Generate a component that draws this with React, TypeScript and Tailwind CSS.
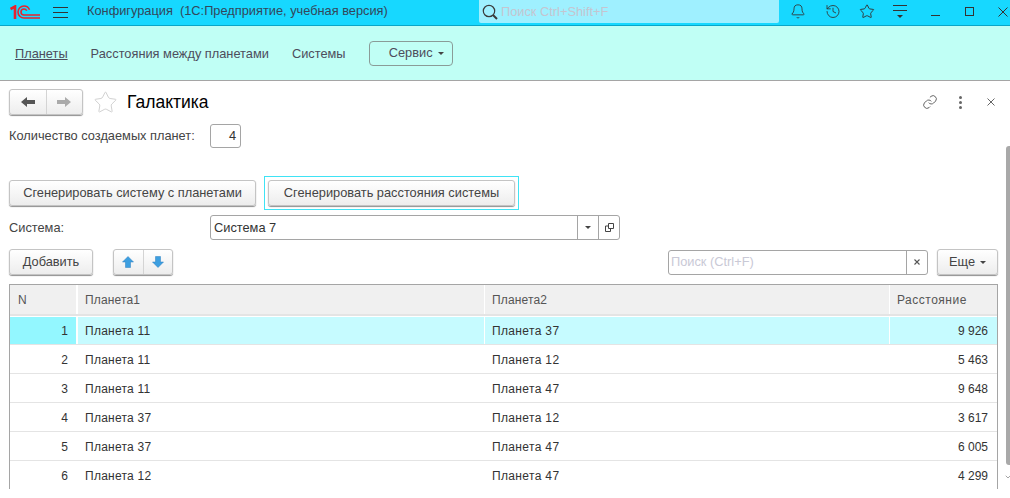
import { Bell, History, Star, ChevronDown } from 'lucide-react'

const rows = [
  ['1', 'Планета 11', 'Планета 37', '9 926'],
  ['2', 'Планета 11', 'Планета 12', '5 463'],
  ['3', 'Планета 11', 'Планета 47', '9 648'],
  ['4', 'Планета 37', 'Планета 12', '3 617'],
  ['5', 'Планета 37', 'Планета 47', '6 005'],
  ['6', 'Планета 12', 'Планета 47', '4 299'],
]

const Caret = ({ className = 'border-t-[#444]' }: { className?: string }) => (
  <span className={`inline-block w-0 h-0 border-x-[3px] border-x-transparent border-t-[3px] ${className}`} />
)

const btn =
  'h-[26px] flex items-center justify-center rounded-[3px] border border-[#c4c4c4] bg-linear-to-b from-white to-[#ededed] shadow-[0_1px_1px_#8f8f8f] text-[#444]'

const Logo = () => (
  <svg width="30" height="14" viewBox="0 0 30 14" fill="none" stroke="#e8222e">
    <path d="M0.5 4 L5 1.5 V14" strokeWidth="2.6" />
    <path d="M30 13 H14 A6 6 0 1 1 14 1 A6 6 0 0 1 19.5 4.8" strokeWidth="1.6" />
    <path d="M30 10 H14 A3 3 0 1 1 14 4 A3 3 0 0 1 16.7 5.8" strokeWidth="1.6" />
  </svg>
)

const Arrow = ({ dir, color }: { dir: 'left' | 'right'; color: string }) => (
  <svg width="14" height="10" viewBox="0 0 14 10" fill={color}>
    {dir === 'left' ? <path d="M0 5 L6 0 V3 H14 V7 H6 V10 Z" /> : <path d="M14 5 L8 0 V3 H0 V7 H8 V10 Z" />}
  </svg>
)

const BlueArrow = ({ up }: { up?: boolean }) => (
  <svg width="12" height="12" viewBox="0 0 12 12" fill="#3d9fe0" stroke="#2a7fc0" strokeWidth="0.5">
    {up ? <path d="M6 0.5 L11.5 6 H8.5 V11.5 H3.5 V6 H0.5 Z" /> : <path d="M6 11.5 L11.5 6 H8.5 V0.5 H3.5 V6 H0.5 Z" />}
  </svg>
)

export default function App() {
  return (
    <div className="relative w-[1010px] h-[498px] overflow-hidden bg-white text-[12.8px] text-[#444] font-['Liberation_Sans',Arial,sans-serif]">
      {/* title bar */}
      <div className="h-[26px] flex items-center bg-[#17d8ff] border-b border-[#0aa6c8]">
        <div className="ml-[10px] -mt-[2px] w-[30px] flex"><Logo /></div>
        <svg className="ml-[13px] -mt-[2px]" width="15" height="12" viewBox="0 0 15 12" stroke="#333" strokeWidth="1">
          <path d="M0 1.5H15M0 6.5H15M0 11.5H15" />
        </svg>
        <span className="ml-[19px] w-[392px] -mt-[3px] text-[#33475a] whitespace-pre">Конфигурация  (1С:Предприятие, учебная версия)</span>
        <div className="w-[300px] h-[23px] -mt-[2px] flex items-center bg-[#9ff0ff] rounded-b-[2px]">
          <svg className="ml-[3px]" width="16" height="16" viewBox="0 0 16 16" fill="none" stroke="#3a3a3a">
            <circle cx="7" cy="7" r="5.7" strokeWidth="1.2" />
            <path d="M11 11 L15 15" strokeWidth="2" />
          </svg>
          <span className="ml-[3px] text-[#c5c5d0]">Поиск Ctrl+Shift+F</span>
        </div>
        <div className="ml-[11px] -mt-[2px] w-[16px] flex justify-center"><Bell size={17} strokeWidth={1.3} color="#333" /></div>
        <div className="ml-[19px] -mt-[2px] w-[16px] flex justify-center"><History size={17} strokeWidth={1.3} color="#333" /></div>
        <div className="ml-[18px] -mt-[2px] w-[16px] flex justify-center"><Star size={17} strokeWidth={1.4} color="#333" /></div>
        <svg className="ml-[18px] -mt-[2px]" width="14" height="13" viewBox="0 0 14 13" stroke="#333">
          <path d="M0 .5H14M0 5.5H14" />
          <path d="M4 10H10L7 13Z" fill="#333" stroke="none" />
        </svg>
        <div className="ml-[24px] w-[9px] h-px mt-[5px] bg-[#333]" />
        <div className="ml-[25px] -mt-[2px] w-[9px] h-[9px] border border-[#333]" />
        <svg className="ml-[24px] -mt-[2px]" width="10" height="10" viewBox="0 0 10 10" stroke="#333">
          <path d="M.5 .5L9.5 9.5M9.5 .5L.5 9.5" />
        </svg>
      </div>

      {/* sections panel */}
      <div className="h-[55px] flex items-center bg-[#c0fff5] border-b border-[#a5a5a5] text-[#4d4d5c] pl-[15px]">
        <span className="underline pt-[1px]">Планеты</span>
        <span className="ml-[23px] pt-[1px]">Расстояния между планетами</span>
        <span className="ml-[23px] pt-[1px]">Системы</span>
        <div className="ml-[23px] w-[84px] h-[25px] flex items-center justify-end gap-[5px] pr-[8px] rounded-[4px] border border-[#8a9c98]">
          <span>Сервис</span>
          <Caret />
        </div>
      </div>

      {/* form */}
      <div className="pl-[9px] pr-[12px]">
        <div className="h-[43px] flex items-center pb-[1px]">
          <div className={`${btn} w-[74px] h-[24px]`}>
            <div className="flex-1 flex justify-center"><Arrow dir="left" color="#555" /></div>
            <div className="w-px h-full bg-[#d4d4d4]" />
            <div className="flex-1 flex justify-center"><Arrow dir="right" color="#aaa" /></div>
          </div>
          <Star className="ml-[10px]" size={25} strokeWidth={0.8} color="#c8c8c8" />
          <span className="ml-[9px] text-[17.5px] text-black">Галактика</span>
          <svg className="ml-auto mr-[21px]" width="16" height="16" viewBox="0 0 24 24" fill="none" stroke="#666" strokeWidth="1.5">
            <path d="M10 13a5 5 0 0 0 7.5.5l3-3a5 5 0 0 0-7-7l-1.7 1.7" />
            <path d="M14 11a5 5 0 0 0-7.5-.5l-3 3a5 5 0 0 0 7 7l1.7-1.7" />
          </svg>
          <div className="mr-[25px] flex flex-col gap-[2px]">
            <span className="w-[3px] h-[3px] rounded-full bg-[#666]" />
            <span className="w-[3px] h-[3px] rounded-full bg-[#666]" />
            <span className="w-[3px] h-[3px] rounded-full bg-[#666]" />
          </div>
          <svg className="mr-[3px]" width="8" height="8" viewBox="0 0 8 8" stroke="#666">
            <path d="M.5 .5L7.5 7.5M7.5 .5L.5 7.5" />
          </svg>
        </div>

        <div className="flex items-center">
          <span className="w-[201px]">Количество создаемых планет:</span>
          <div className="w-[31px] h-[24px] flex items-center justify-end pr-[4px] rounded-[3px] border border-[#a5a5a5] text-[#333]">4</div>
        </div>

        <div className="mt-[28px] flex items-center">
          <div className={`${btn} w-[247px] h-[25px]`}>Сгенерировать систему с планетами</div>
          <div className="ml-[8px] p-[3px] border border-[#3fe3f5]">
            <div className={`${btn} w-[247px] h-[25px]`}>Сгенерировать расстояния системы</div>
          </div>
        </div>

        <div className="mt-[5px] flex items-center">
          <span className="w-[201px]">Система:</span>
          <div className="w-[410px] h-[25px] flex items-center rounded-[3px] border border-[#a5a5a5] text-[#333]">
            <span className="flex-1 pl-[3px]">Система 7</span>
            <div className="w-[21px] h-full flex items-center justify-center border-l border-[#a5a5a5]"><Caret /></div>
            <div className="w-[21px] h-full flex items-center justify-center border-l border-[#a5a5a5]">
              <svg width="9" height="9" viewBox="0 0 9 9" fill="none" stroke="#444">
                <path d="M3.5 .5H8.5V5.5H3.5Z" />
                <path d="M3.5 3H.5V8.5H5.5V5.5" />
              </svg>
            </div>
          </div>
        </div>

        <div className="mt-[9px] flex items-center">
          <div className={`${btn} w-[84px]`}>Добавить</div>
          <div className={`${btn} ml-[20px] w-[60px]`}>
            <div className="flex-1 flex justify-center"><BlueArrow up /></div>
            <div className="w-px h-full bg-[#d4d4d4]" />
            <div className="flex-1 flex justify-center"><BlueArrow /></div>
          </div>
          <div className="ml-auto w-[260px] h-[25px] flex items-center rounded-[3px] border border-[#a5a5a5]">
            <span className="flex-1 pl-[2px] text-[#c9c9d6]">Поиск (Ctrl+F)</span>
            <div className="w-[21px] h-full flex items-center justify-center border-l border-[#a5a5a5]">
              <svg width="6" height="6" viewBox="0 0 6 6" stroke="#555" strokeWidth="1.1">
                <path d="M.5 .5L5.5 5.5M5.5 .5L.5 5.5" />
              </svg>
            </div>
          </div>
          <div className={`${btn} ml-[9px] w-[61px] gap-[5px]`}>
            <span>Еще</span>
            <Caret />
          </div>
        </div>

        {/* table */}
        <div className="mt-[9px] h-[205px] border-x border-t border-[#a5a5a5] overflow-hidden text-[12px]">
          <div className="h-[31px] flex bg-[#f0f0f0] border-b-2 border-[#e4e4e4] text-[#555]">
            <div className="w-[66px] pl-[8px] flex items-center">N</div>
            <div className="w-[408px] pl-[7px] flex items-center border-l-2 border-white tracking-[0.15px]">Планета1</div>
            <div className="w-[405px] pl-[7px] flex items-center border-l border-white tracking-[0.15px]">Планета2</div>
            <div className="flex-1 pl-[7px] flex items-center border-l border-white tracking-[0.5px]">Расстояние</div>
          </div>
          {rows.map((r, i) => (
            <div
              key={r[0]}
              className={`h-[29px] flex border-b border-[#e4e4e4] text-[#333] ${i === 0 ? 'bg-[#c6fbff] border-t-white border-t' : 'pt-[1px]'}`}
            >
              <div className={`w-[66px] pr-[8px] flex items-center justify-end ${i === 0 ? 'bg-[#93f7ff]' : ''}`}>{r[0]}</div>
              <div className={`w-[408px] pl-[7px] flex items-center tracking-[0.25px] border-l-2 ${i === 0 ? 'border-white' : 'border-transparent'}`}>{r[1]}</div>
              <div className={`w-[405px] pl-[7px] flex items-center tracking-[0.35px] border-l ${i === 0 ? 'border-white' : 'border-transparent'}`}>{r[2]}</div>
              <div className={`flex-1 pr-[9px] flex items-center justify-end border-l ${i === 0 ? 'border-white' : 'border-transparent'}`}>{r[3]}</div>
            </div>
          ))}
        </div>
      </div>

      {/* page scrollbar */}
      <div className="absolute left-[1006px] top-[146px] w-[5px] h-[319px] rounded-l-[3px] bg-[#a9a9a9]" />
      <ChevronDown className="absolute left-[1004px] top-[473px]" size={8} color="#777" />
    </div>
  )
}
